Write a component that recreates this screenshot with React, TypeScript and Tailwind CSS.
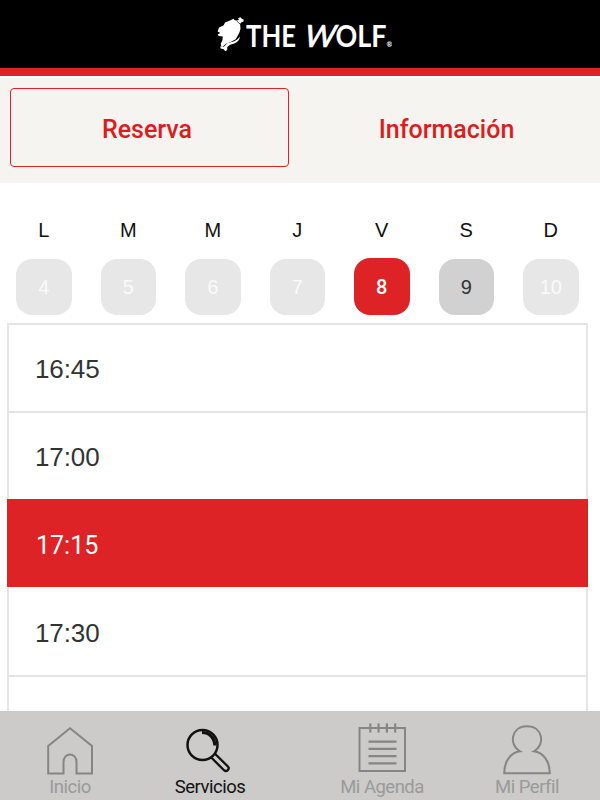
import clsx from "clsx";

/* ================= DATA ================= */

const DAYS = [
  { letter: "L", date: 4, state: "disabled" },
  { letter: "M", date: 5, state: "disabled" },
  { letter: "M", date: 6, state: "disabled" },
  { letter: "J", date: 7, state: "disabled" },
  { letter: "V", date: 8, state: "selected" },
  { letter: "S", date: 9, state: "available" },
  { letter: "D", date: 10, state: "disabled" },
];

const SLOTS = ["16:45", "17:00", "17:15", "17:30", ""];
const SELECTED_SLOT = "17:15";

/* ================= ICONS ================= */

function HomeIcon() {
  return (
    <svg width="48" height="50" viewBox="0 0 48 50" fill="none" stroke="#858585" strokeWidth="2">
      <path d="M2.200 21 24 3.200 46 21v27.500H30.500V37c0-10-13-10-13 0v11.500H2.200Z" />
    </svg>
  );
}

function SearchIcon() {
  return (
    <svg width="48" height="50" viewBox="0 0 48 50" fill="none" stroke="#111">
      <circle cx="16.500" cy="20" r="15" strokeWidth="2.500" />
      <path d="M16 7.500c7.500 0 12.500 5.300 12.900 13" strokeWidth="3.200" />
      <path d="m25 32.300 13 12.900c2.600 2.300 6.200-1.200 3.900-3.700L29 28.700" strokeWidth="2.300" />
    </svg>
  );
}

function AgendaIcon() {
  return (
    <svg width="48" height="50" viewBox="0 0 48 50" fill="none" stroke="#858585" strokeWidth="2">
      <path d="M1.500 3h45.500v43H1.500Z" />
      <path
        d="M12.300-1.500v9M20.600-1.500v9M28.900-1.500v9M37.200-1.500v9M10.500 16.700h28M10.500 23.900h28M10.500 31.100h28M10.500 38.300h28"
        className="[stroke-width:2.200]"
      />
    </svg>
  );
}

function ProfileIcon() {
  return (
    <svg width="48" height="50" viewBox="0 0 48 50" fill="none" stroke="#858585" strokeWidth="2">
      <path d="M17 26.300C5.500 20 8 1.300 24 1.300S42.500 20 31 26.300C40 27.500 46.800 36 46.800 48.200H1.200C1.200 36 8 27.500 17 26.300Z" />
    </svg>
  );
}

const NAV = [
  { label: "Inicio", icon: HomeIcon, place: "w-[140px]" },
  { label: "Servicios", icon: SearchIcon, place: "w-[140px]" },
  { label: "Mi Agenda", icon: AgendaIcon, place: "ml-[32px] w-[140px]" },
  { label: "Mi Perfil", icon: ProfileIcon, place: "ml-[5px] w-[140px]" },
];

/* ================= HEADER ================= */

function Logo() {
  return (
    <svg width="176" height="40" viewBox="216 14 176 40" fill="#fff" aria-label="The Wolf">
      <path d="m219 27.500 4.500-2 1.500-3 5-2 3.500-1.800 1.200 1.500 2 .3 1 1.800 2.500 2.200.3 4.300-1 3.500-1.800 3.500-2 3.500-5 2.800-5 2-4 3.500-1-3.500 1.800-4.200.200-3.500-4.100-.4-.9-1.800 2.600-1.300-2.600-1.500Z" />
      <path d="m237 20.500 2-1-1-1.300 2.400-.900 1.400 1.400 2 1-.6 2.300-1.500-.200-.9 1.600-1.800-.3Z" />
      <path d="M240 36.500c-1 5.500-4.500 7.200-10 8.200l-2.700 2.300-.1 3-2 1.300-1.500-2-3-.8-.5-2 3.500.2 4-3.800c6-1.200 9.500-2.400 12.300-6.400Z" />
      <g className="font-['Lato'] text-[30.500px] font-bold">
        <text x="246" y="46.800" textLength="50" lengthAdjust="spacingAndGlyphs">THE</text>
        <text
          transform="translate(302.500 46.800) skewX(-14)"
          textLength="31"
          lengthAdjust="spacingAndGlyphs"
          className="font-normal [stroke-width:0.700]"
          stroke="#fff"
        >
          W
        </text>
        <text x="335.500" y="46.800">
          <tspan textLength="51" lengthAdjust="spacingAndGlyphs">OLF</tspan>
          <tspan className="text-[7px]">®</tspan>
        </text>
      </g>
    </svg>
  );
}

/* ================= DAY PICKER ================= */

function DayPicker() {
  return (
    <div className="ml-[1.5px] mt-[35px] grid h-[105px] w-[591.5px] grid-cols-7">
      {DAYS.map(({ letter, date, state }) => (
        <div key={date} className="flex flex-col items-center">
          <span className="text-[20px] leading-[24px] text-[#111]">{letter}</span>
          <span
            className={clsx(
              "flex w-[55.5px] items-center justify-center rounded-[16px] text-[20px]",
              state === "selected" && "mt-[16px] h-[57px] bg-[#dd2326] font-['Roboto'] font-medium text-white",
              state === "available" && "mt-[17px] h-[55.5px] bg-[#d1d1d1] text-[#333]",
              state === "disabled" && "mt-[17px] h-[55.5px] bg-[#e7e7e7] text-[#fafafa]"
            )}
          >
            {date}
          </span>
        </div>
      ))}
    </div>
  );
}

/* ================= PAGE ================= */

export default function App() {
  return (
    <div className="flex h-[800px] w-[600px] flex-col overflow-hidden bg-white font-['Liberation_Sans',sans-serif]">
      <header className="flex h-[76px] shrink-0 justify-center border-b-8 border-[#dd2326] bg-black pl-[8px] pt-[14px]">
        <Logo />
      </header>

      <div className="mt-[2px] flex h-[105px] shrink-0 bg-[#f5f4f0] px-[10px] pt-[10px] font-['Roboto',sans-serif] text-[25px] font-medium text-[#dd1c20]">
        <button className="h-[79px] w-[279px] rounded-[4px] border-[1.5px] border-[#dd2326] pr-[5px] pt-[4px]">Reserva</button>
        <button className="h-[79px] flex-1 pl-[14px] pt-[4px]">Información</button>
      </div>

      <DayPicker />

      <ul className="ml-[7px] w-[581px] flex-1 overflow-hidden border-t-2 border-[#e5e5e5]">
        {SLOTS.map((slot) => (
          <li
            key={slot}
            className={clsx(
              "flex items-center",
              slot === SELECTED_SLOT
                ? "relative -mt-[2px] h-[88px] bg-[#dd2326] pl-[29px] pt-[6px] font-['Roboto'] text-[25px] text-white"
                : "h-[88px] border-x-2 border-b-2 border-[#e5e5e5] pl-[26px] pt-[2px] text-[26px] tracking-[-0.1px] text-[#333]",
              slot === "17:30" && "h-[90px] pt-[4px]"
            )}
          >
            {slot}
          </li>
        ))}
      </ul>

      <nav className="flex h-[89px] shrink-0 bg-[#cccbc9] font-['Roboto',sans-serif]">
        {NAV.map(({ label, icon: Icon, place }) => (
          <a
            key={label}
            className={clsx(
              "flex flex-col items-center pt-[14px] text-[18.5px] leading-[24px] tracking-[-0.5px] [&_svg]:overflow-visible",
              place,
              label === "Servicios" ? "text-[#111]" : "text-[#9a9a9a]"
            )}
          >
            <Icon />
            {label}
          </a>
        ))}
      </nav>
    </div>
  );
}
